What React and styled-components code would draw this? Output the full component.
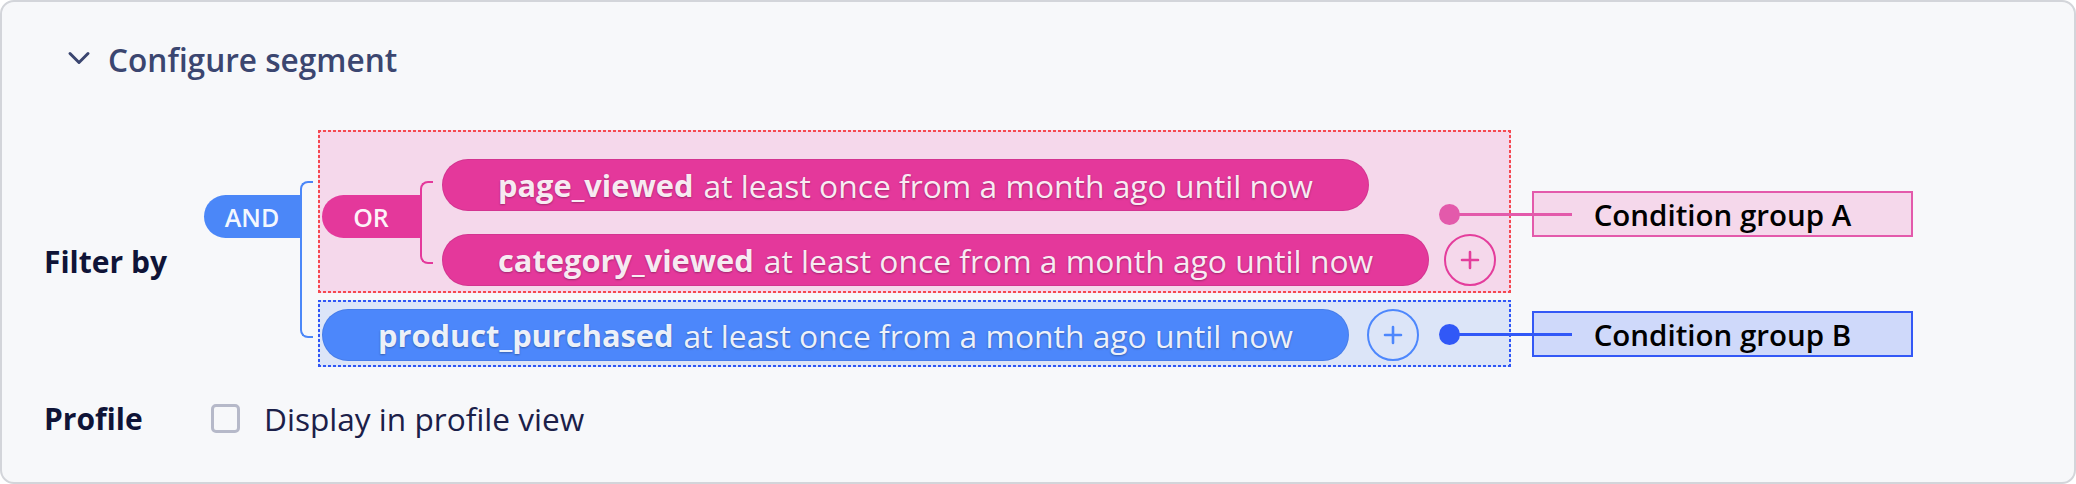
import React from "react";
import styled, { createGlobalStyle, css } from "styled-components";

const GlobalStyle = createGlobalStyle`
  body {
    margin: 0;
    background: #ffffff;
    font-family: "Open Sans", "Noto Sans", sans-serif;
  }
`;

const dashedEdges = (color) => css`
  background-color: ${(p) => p.$fill};
  background-image: repeating-linear-gradient(90deg, ${color} 0 3px, transparent 3px 5px),
    repeating-linear-gradient(90deg, ${color} 0 3px, transparent 3px 5px),
    repeating-linear-gradient(0deg, ${color} 0 3px, transparent 3px 5px),
    repeating-linear-gradient(0deg, ${color} 0 3px, transparent 3px 5px);
  background-size: 100% 2px, 100% 2px, 2px 100%, 2px 100%;
  background-position: 0 0, 0 100%, 0 0, 100% 0;
  background-repeat: no-repeat;
`;

const Panel = styled.section`
  box-sizing: border-box;
  width: 2076px;
  height: 484px;
  border: 2px solid #d3d5da;
  border-radius: 14px;
  background: #f7f8fa;
  padding: 37px 42px 0;
  display: flex;
  flex-direction: column;
`;

const Header = styled.div`
  display: flex;
  align-items: center;
  height: 40px;
  gap: 17px;
  padding-left: 23px;
  color: #3b4670;
  font-size: 31.6px;
  font-weight: 600;
`;

const Row = styled.div`
  display: flex;
  align-items: ${(p) => (p.$center ? "center" : "flex-start")};
  margin-top: ${(p) => p.$top}px;
`;

const RowLabel = styled.div`
  width: 160px;
  flex-shrink: 0;
  margin-top: ${(p) => p.$top || 0}px;
  line-height: 40px;
  font-size: 30px;
  font-weight: 700;
  color: #0f1437;
`;

const Op = styled.div`
  box-sizing: border-box;
  flex-shrink: 0;
  width: ${(p) => p.$w}px;
  height: 43px;
  margin-top: ${(p) => p.$top}px;
  border-radius: 22px 0 0 22px;
  background: ${(p) => p.$bg};
  display: flex;
  align-items: center;
  justify-content: center;
  color: rgba(255, 255, 255, 0.95);
  font-size: 25px;
  font-weight: 600;
`;

const Bracket = styled.div`
  box-sizing: border-box;
  flex-shrink: 0;
  width: 13px;
  height: ${(p) => p.$h}px;
  margin-top: ${(p) => p.$top}px;
  border: 2.5px solid ${(p) => p.$color};
  border-right: none;
  border-radius: 8px 0 0 8px;
`;

const Groups = styled.div`
  display: flex;
  flex-direction: column;
  gap: 7px;
  margin-left: 5px;
`;

const GroupBox = styled.div`
  position: relative;
  box-sizing: border-box;
  width: 1193px;
  display: flex;
  align-items: flex-start;
  padding: ${(p) => p.$pad};
  ${(p) => dashedEdges(p.$dash)}
`;

const Leaves = styled.div`
  display: flex;
  flex-direction: column;
  gap: 23px;
  margin-left: 9px;
`;

const LeafRow = styled.div`
  display: flex;
  align-items: center;
`;

const Pill = styled.div`
  display: inline-flex;
  align-items: center;
  height: 52px;
  padding: 0 56px;
  border-radius: 26px;
  background: ${(p) => p.$bg};
  box-shadow: inset 0 0 0 1px rgba(0, 0, 0, 0.07);
  color: rgba(255, 255, 255, 0.92);
  font-size: 31.8px;
  white-space: nowrap;
  text-shadow: 0 1px 2px rgba(0, 0, 0, 0.3);
`;

const EventName = styled.span`
  font-size: 30.8px;
  font-weight: 700;
  margin-right: 10px;
`;

const AddButton = styled.button`
  box-sizing: border-box;
  width: 52px;
  height: 52px;
  margin-left: ${(p) => p.$gap}px;
  padding: 0;
  border-radius: 50%;
  border: 2px solid ${(p) => p.$color};
  background: transparent;
  color: ${(p) => p.$color};
  display: flex;
  align-items: center;
  justify-content: center;
`;

const Callout = styled.div`
  position: absolute;
  left: 1121px;
  top: ${(p) => p.$top}px;
  display: flex;
  align-items: center;

  &::before {
    content: "";
    position: absolute;
    left: 10px;
    top: 50%;
    width: 123px;
    height: 3px;
    margin-top: -1.5px;
    background: ${(p) => p.$color};
    z-index: 1;
  }
`;

const Dot = styled.span`
  width: 21px;
  height: 21px;
  border-radius: 50%;
  background: ${(p) => p.$color};
`;

const CalloutLabel = styled.div`
  box-sizing: border-box;
  width: 381px;
  height: 46px;
  margin-left: 72px;
  border: 2px solid ${(p) => p.$color};
  background: ${(p) => p.$fill};
  display: flex;
  align-items: center;
  justify-content: center;
  color: #000;
  font-size: 29.5px;
  font-weight: 600;
`;

const Checkbox = styled.span`
  box-sizing: border-box;
  width: 29px;
  height: 29px;
  margin-left: 7px;
  border: 3px solid #b6b9c9;
  border-radius: 5px;
`;

const CheckText = styled.span`
  margin-left: 24px;
  font-size: 31.6px;
  color: #1b2049;
`;

const PINK = "#e4389b";
const BLUE = "#4c87fb";

function Chevron() {
  return (
    <svg width="24" height="24" viewBox="0 0 24 24" fill="none">
      <path d="M3 6.5 12 15.5 21 6.5" stroke="#3b4670" strokeWidth="3" strokeLinecap="round" strokeLinejoin="round" />
    </svg>
  );
}

function PlusIcon() {
  return (
    <svg width="20" height="20" viewBox="0 0 20 20" fill="none">
      <path d="M10 2v16M2 10h16" stroke="currentColor" strokeWidth="2.6" strokeLinecap="round" />
    </svg>
  );
}

function Condition({ event, bg }) {
  return (
    <Pill $bg={bg}>
      <EventName>{event}</EventName>
      at least once from a month ago until now
    </Pill>
  );
}

export default function App() {
  return (
    <>
      <GlobalStyle />
      <Panel>
        <Header>
          <Chevron />
          Configure segment
        </Header>

        <Row $top={51}>
          <RowLabel $top={112}>Filter by</RowLabel>
          <Op $w={96} $top={65} $bg="#4b87f8">AND</Op>
          <Bracket $color="#4b87f8" $top={51} $h={157} />
          <Groups>
            <GroupBox $pad="29px 0 7px 4px" $dash="#f5484f" $fill="#f5d8eb">
              <Op $w={98} $top={36} $bg={PINK}>OR</Op>
              <Bracket $color={PINK} $top={22} $h={83} />
              <Leaves>
                <LeafRow>
                  <Condition event="page_viewed" bg={PINK} />
                </LeafRow>
                <LeafRow>
                  <Condition event="category_viewed" bg={PINK} />
                  <AddButton $color="#e43d9c" $gap={15}>
                    <PlusIcon />
                  </AddButton>
                </LeafRow>
              </Leaves>
              <Callout $top={61} $color="#e35aab">
                <Dot $color="#e35aab" />
                <CalloutLabel $color="#e35aab" $fill="#f5d8eb">Condition group A</CalloutLabel>
              </Callout>
            </GroupBox>

            <GroupBox $pad="9px 0 6px 4px" $dash="#2f56f6" $fill="#dce5f8">
              <LeafRow>
                <Condition event="product_purchased" bg={BLUE} />
                <AddButton $color="#4d87fd" $gap={18}>
                  <PlusIcon />
                </AddButton>
              </LeafRow>
              <Callout $top={11} $color="#3158f7">
                <Dot $color="#3158f7" />
                <CalloutLabel $color="#3358f6" $fill="#cfd9fa">Condition group B</CalloutLabel>
              </Callout>
            </GroupBox>
          </Groups>
        </Row>

        <Row $top={30} $center>
          <RowLabel>Profile</RowLabel>
          <Checkbox />
          <CheckText>Display in profile view</CheckText>
        </Row>
      </Panel>
    </>
  );
}
